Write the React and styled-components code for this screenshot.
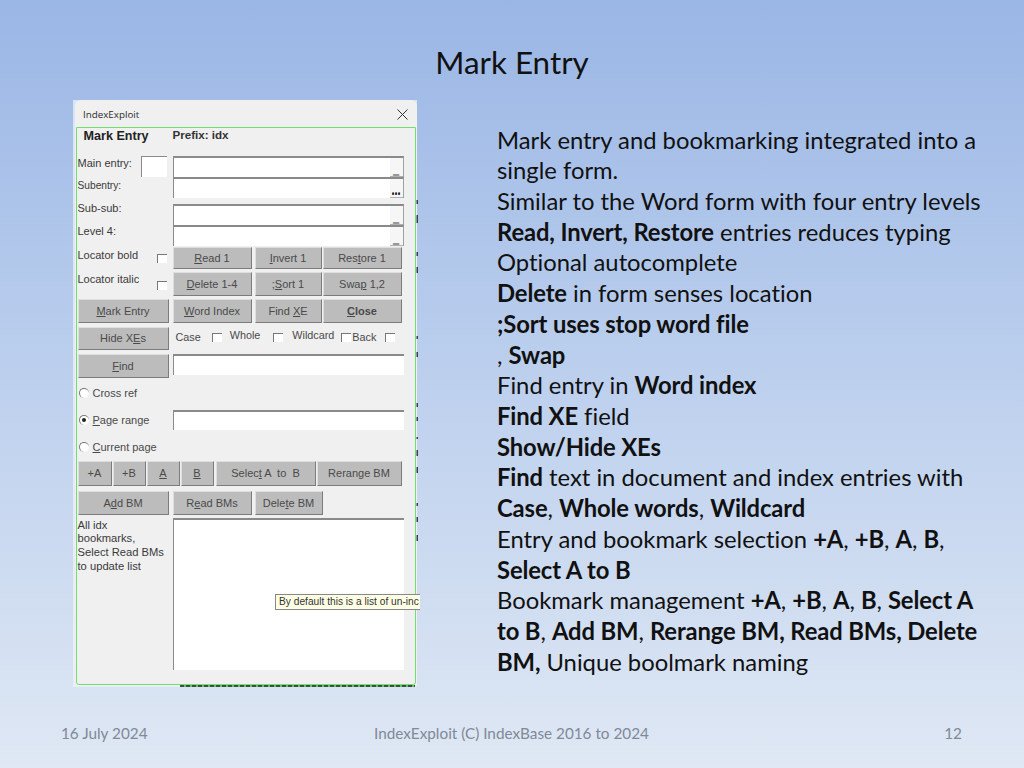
import React from 'react';
import styled, { createGlobalStyle } from 'styled-components';

const Global = createGlobalStyle`
  html, body { margin: 0; padding: 0; }
  body { font-family: Lato, "Open Sans", sans-serif; font-variant-ligatures: none; }
`;

const Slide = styled.div`
  width: 1024px; height: 768px; overflow: hidden;
  display: flex; flex-direction: column;
  background: linear-gradient(180deg, #9ab6e5 0%, #b6cbec 40%, #dfe8f4 100%);
  color: #111;
`;
const Title = styled.h1`
  margin: 0; height: 100px; padding-top: 41px; box-sizing: border-box;
  text-align: center; font-size: 31.4px; line-height: 42px; font-weight: 400;
`;
const Content = styled.div`
  display: flex; align-items: flex-start; padding-left: 73px; height: 610px;
`;
const Dialog = styled.div`
  position: relative; width: 344px; height: 587px; flex: none; box-sizing: border-box;
  background: rgba(235,241,250,.75);
  font-family: "Liberation Sans", Arial, sans-serif; color: #333;
`;
const Win = styled.div`
  margin-left: 2px; height: 586px; width: 342px; padding: 1px 1px 0 1px; box-sizing: border-box;
  background: #f0f0f0; border-radius: 6px 6px 3px 3px;
  display: flex; flex-direction: column;
`;
const TitleBar = styled.div`
  height: 26px; flex: none; display: flex; align-items: center; justify-content: space-between;
  padding: 0 8px 0 7px; font-size: 9.8px; font-family: "Open Sans", sans-serif; color: #2c2c2c;
`;
const FormFrame = styled.div`
  height: 558px; flex: none; box-sizing: border-box; border: 1.5px solid #6fe06f; width: 340px; border-radius: 0 0 3px 3px;
  padding: 0 0 0 .5px; display: flex; flex-direction: column;
`;
const Head = styled.div`
  height: 27.5px; flex: none; display: grid; grid-template-columns: 95px 1fr; align-items: start; font-weight: 700; padding-left: 6px;
`;
const HeadMain = styled.span` font-size: 12.6px; line-height: 16px; color: #222; `;
const HeadPrefix = styled.span` font-size: 11.6px; line-height: 15px; margin-top: -1px; color: #333; margin-left: -6px; `;
const Row = styled.div`
  display: grid; grid-template-columns: 95px 1fr;
  height: ${p => p.$h}px; margin-top: ${p => p.$mt || 0}px; flex: none;
`;
const Label = styled.span`
  font-size: ${p => p.$fs || 11}px; line-height: 14px; margin-top: ${p => p.$top || 0}px; white-space: nowrap; color: #3a3a3a;
`;
const LeftCell = styled.div`
  display: flex; justify-content: space-between; align-items: flex-start; padding-right: 6px;
`;
const Field = styled.div`
  position: relative; width: ${p => p.$w || 231}px; height: ${p => p.$h || 21}px; box-sizing: border-box;
  background: #fff; border-top: 2px solid #8a8a8a; border-left: 1.5px solid #8a8a8a;
  ${p => p.$r ? 'border-right: 1.5px solid #a0a0a0;' : ''}
`;
const SmallBox = styled(Field)`
  width: 26px; height: 21px;
  border-top-width: 1.5px; border-left-width: 1px;
`;
const Drop = styled.span`
  position: absolute; right: 0; bottom: 0; width: 13px; height: 19px; background: #f6f6f6; box-sizing: border-box;
  display: flex; align-items: flex-end; justify-content: center; padding-bottom: 3px;
  font-size: 11px; line-height: 8px; font-weight: 700; color: #111; text-shadow: 0 1px 0 #111;
  border-bottom: 1px solid #b0b0b0;
`;
const Btn = styled.div`
  width: ${p => p.$w}px; height: ${p => p.$h || 24}px; box-sizing: border-box; flex: none;
  display: flex; align-items: center; justify-content: center; white-space: pre;
  background: #bcbcbc; font-size: 11px; color: #4a4a4a; font-weight: ${p => p.$b ? 700 : 400};
  border-right: 1.5px solid #7c7c7c; border-bottom: 1.5px solid #7c7c7c;
  border-top: 1px solid #dedede; border-left: 1px solid #dedede;
  margin-left: ${p => p.$ml || 0}px;
  u { text-underline-offset: 1px; }
`;
const Buttons = styled.div`
  display: flex; margin-top: ${p => p.$mt || 0}px;
`;
const Check = styled.span`
  display: inline-block; flex: none; width: 10px; height: 9.5px; box-sizing: border-box; background: #fff;
  border-top: 1px solid #777; border-left: 1px solid #777;
  margin-top: ${p => p.$mt || 0}px; margin-left: ${p => p.$ml || 0}px;
`;
const Options = styled.div`
  display: flex; align-items: flex-start; padding-top: 3px; font-size: 10.8px; color: #4a4a4a; line-height: 14px; white-space: nowrap;
`;
const Opt = styled.span` margin-left: ${p => p.$ml || 0}px; margin-top: ${p => p.$mt || 0}px; `;
const Radio = styled.span`
  display: inline-flex; align-items: center; justify-content: center; flex: none;
  width: 10px; height: 10px; border-radius: 50%; box-sizing: border-box; background: #fff;
  border-top: 1px solid #777; border-left: 1px solid #777; margin-right: 4px;
  &::after { content: ""; width: 4px; height: 4px; border-radius: 50%; background: ${p => p.$on ? '#222' : 'transparent'}; }
`;
const RadioLabel = styled.div`
  display: flex; align-items: center; font-size: 11px; color: #4a4a4a; padding-left: 1px; height: 14px; margin-top: ${p => p.$mt || 0}px; white-space: nowrap;
`;
const Note = styled.div`
  font-size: 11.2px; line-height: 13.7px; color: #3a3a3a; padding-top: 1px;
`;
const Tip = styled.div`
  position: absolute; left: 202px; top: 494px; width: 145px; height: 16px; box-sizing: border-box; overflow: hidden;
  background: #ffffe6; border: 1px solid #888; border-right: 0;
  font-size: 10.2px; line-height: 14px; padding-left: 3px; white-space: nowrap; color: #333;
`;
const Behind = styled.div`
  position: absolute; left: 107px; width: 235px; top: 585px; height: 1.5px;
  background: repeating-linear-gradient(90deg, #3f4f3f 0 4px, #6fb56f 4px 6px);
`;
const EdgeMarks = styled.svg`
  position: absolute; left: 343px; top: 0; width: 3px; height: 587px;
`;
const Notes = styled.div`
  margin-left: 80px; width: 520px; padding-top: 24.5px; font-size: 23.8px; line-height: 30.72px; color: #111; white-space: nowrap;
  b { font-weight: 700; letter-spacing: -0.12px; }
`;
const Footer = styled.div`
  flex: 1; display: grid; grid-template-columns: 1fr 1fr 1fr; align-items: start; padding: 13px 62px 0 61px;
  font-size: 15.3px; line-height: 20px; color: #7f8998;
`;
const FootMid = styled.span` text-align: center; white-space: nowrap; margin: 0 -20px; `;
const FootEnd = styled.span` text-align: right; `;

const CloseIcon = () => (
  <svg width="11" height="11" viewBox="0 0 11 11"><path d="M.5.5l10 10M10.5.5l-10 10" stroke="#333" strokeWidth="1" fill="none" /></svg>
);

const marks = [[100, 4], [115, 8], [152, 4], [167, 6], [236, 3], [252, 5], [303, 4], [317, 4], [337, 2], [350, 6], [367, 6], [403, 3], [417, 5], [435, 6]];

export default function App() {
  return (
    <Slide>
      <Global />
      <Title>Mark Entry</Title>
      <Content>
        <Dialog>
          <Win>
            <TitleBar>IndexExploit<CloseIcon /></TitleBar>
            <FormFrame>
              <Head><HeadMain>Mark Entry</HeadMain><HeadPrefix>Prefix: idx</HeadPrefix></Head>
              <Row $h={21}>
                <LeftCell><Label>Main entry:</Label><SmallBox /></LeftCell>
                <Field $r><Drop>_</Drop></Field>
              </Row>
              <Row $h={21}>
                <Label $top={2} $fs={10.2}>Subentry:</Label>
                <Field $r><Drop>...</Drop></Field>
              </Row>
              <Row $h={21} $mt={6}>
                <Label $top={-3}>Sub-sub:</Label>
                <Field $r><Drop>_</Drop></Field>
              </Row>
              <Row $h={21}>
                <Label $top={-1}>Level 4:</Label>
                <Field $r><Drop>_</Drop></Field>
              </Row>
              <Row $h={22} $mt={1}>
                <LeftCell><Label $top={1}>Locator bold</Label><Check $mt={7} /></LeftCell>
                <Buttons>
                  <Btn $w={79} $h={22}><span><u>R</u>ead 1</span></Btn>
                  <Btn $w={67} $h={22} $ml={3}><span><u>I</u>nvert 1</span></Btn>
                  <Btn $w={79} $h={22} $ml={1}><span>Res<u>t</u>ore 1</span></Btn>
                </Buttons>
              </Row>
              <Row $h={24} $mt={3}>
                <LeftCell><Label>Locator italic</Label><Check $mt={9} /></LeftCell>
                <Buttons>
                  <Btn $w={79}><span><u>D</u>elete 1-4</span></Btn>
                  <Btn $w={67} $ml={3}><span>;<u>S</u>ort 1</span></Btn>
                  <Btn $w={79} $ml={1}><span>Swa<u>p</u> 1,2</span></Btn>
                </Buttons>
              </Row>
              <Row $h={24} $mt={3}>
                <Btn $w={91}><span><u>M</u>ark Entry</span></Btn>
                <Buttons>
                  <Btn $w={79}><span><u>W</u>ord Index</span></Btn>
                  <Btn $w={67} $ml={3}><span>Find <u>X</u>E</span></Btn>
                  <Btn $w={79} $ml={1} $b><span><u>C</u>lose</span></Btn>
                </Buttons>
              </Row>
              <Row $h={23} $mt={4}>
                <Btn $w={91} $h={23}><span>Hide X<u>E</u>s</span></Btn>
                <Options>
                  <Opt $ml={3}>Case</Opt><Check $mt={3} $ml={11} />
                  <Opt $ml={8} $mt={-2}>Whole</Opt><Check $mt={3} $ml={13} />
                  <Opt $ml={9} $mt={-2}>Wildcard</Opt><Check $mt={3} $ml={7} />
                  <Opt $ml={1}>Back</Opt><Check $mt={3} $ml={9} />
                </Options>
              </Row>
              <Row $h={24} $mt={4}>
                <Btn $w={91}><span><u>F</u>ind</span></Btn>
                <Field $h={21} />
              </Row>
              <RadioLabel $mt={8}><Radio />Cross ref</RadioLabel>
              <Row $h={20} $mt={10}>
                <RadioLabel $mt={3}><Radio $on /><span><u>P</u>age range</span></RadioLabel>
                <Field $h={20} />
              </Row>
              <RadioLabel $mt={10}><Radio /><span><u>C</u>urrent page</span></RadioLabel>
              <Buttons $mt={7}>
                <Btn $w={34} $h={25}>+A</Btn>
                <Btn $w={33} $h={25} $ml={1}>+B</Btn>
                <Btn $w={33} $h={25} $ml={1}><u>A</u></Btn>
                <Btn $w={33} $h={25} $ml={1}><u>B</u></Btn>
                <Btn $w={100} $h={25} $ml={2}><span>Selec<u>t</u> A  to  B</span></Btn>
                <Btn $w={85} $h={25} $ml={1}>Rerange BM</Btn>
              </Buttons>
              <Row $h={24} $mt={5}>
                <Btn $w={91}><span>A<u>d</u>d BM</span></Btn>
                <Buttons>
                  <Btn $w={79}><span>R<u>e</u>ad BMs</span></Btn>
                  <Btn $w={68} $ml={3}><span>Dele<u>t</u>e BM</span></Btn>
                </Buttons>
              </Row>
              <Row $h={152} $mt={3}>
                <Note>All idx<br />bookmarks,<br />Select Read BMs<br />to update list</Note>
                <Field $h={152} />
              </Row>
            </FormFrame>
          </Win>
          <Tip>By default this is a list of un-inc</Tip>
          <Behind />
          <EdgeMarks viewBox="0 0 3 587">
            {marks.map(([y, h]) => <rect key={y} x="0.5" y={y} width="1.5" height={h} fill="#33404f" />)}
          </EdgeMarks>
        </Dialog>
        <Notes>
          Mark entry and bookmarking integrated into a<br />
          single form.<br />
          Similar to the Word form with four entry levels<br />
          <b>Read, Invert, Restore</b> entries reduces typing<br />
          Optional autocomplete<br />
          <b>Delete</b> in form senses location<br />
          <b>;Sort uses stop word file</b><br />
          , <b>Swap</b><br />
          Find entry in <b>Word index</b><br />
          <b>Find XE</b> field<br />
          <b>Show/Hide XEs</b><br />
          <b>Find</b> text in document and index entries with<br />
          <b>Case</b>, <b>Whole words</b>, <b>Wildcard</b><br />
          Entry and bookmark selection <b>+A</b>, <b>+B</b>, <b>A</b>, <b>B</b>,<br />
          <b>Select A to B</b><br />
          Bookmark management <b>+A</b>, <b>+B</b>, <b>A</b>, <b>B</b>, <b>Select A</b><br />
          <b>to B</b>, <b>Add BM</b>, <b>Rerange BM, Read BMs, Delete</b><br />
          <b>BM,</b> Unique boolmark naming
        </Notes>
      </Content>
      <Footer>
        <span>16 July 2024</span>
        <FootMid>IndexExploit (C) IndexBase 2016 to 2024</FootMid>
        <FootEnd>12</FootEnd>
      </Footer>
    </Slide>
  );
}
